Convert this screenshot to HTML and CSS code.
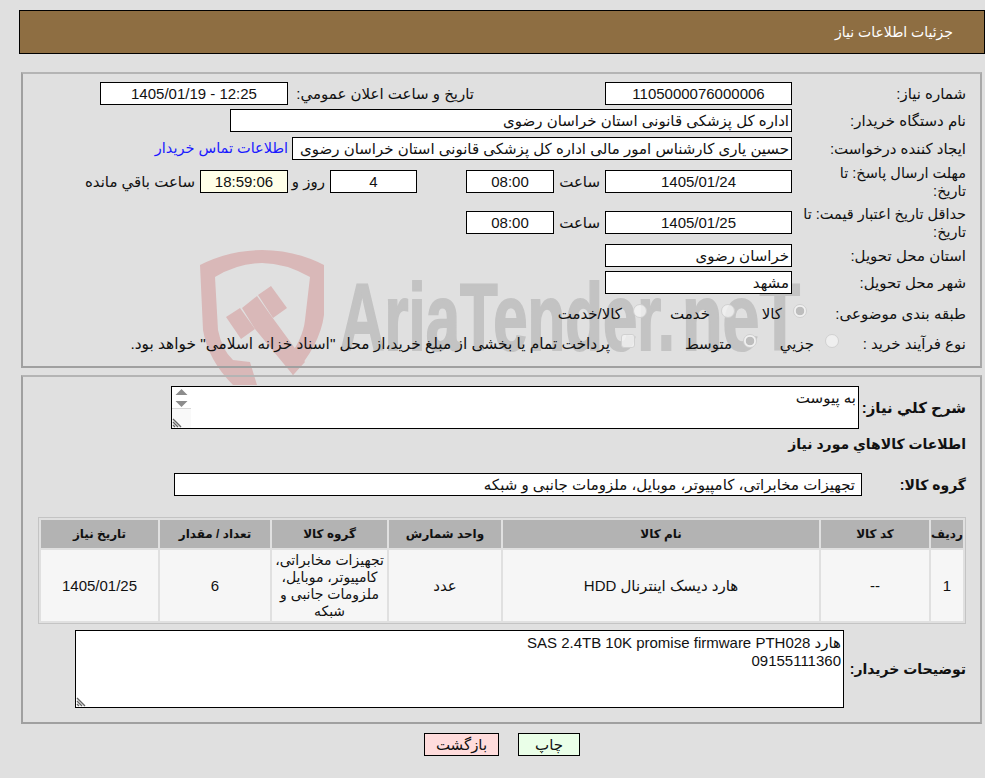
FILE: index.html
```html
<!DOCTYPE html>
<html lang="fa" dir="rtl">
<head>
<meta charset="utf-8">
<title>جزئیات اطلاعات نیاز</title>
<link rel="stylesheet" href="styles.css">
</head>
<body>
<svg class="watermark" viewBox="0 0 660 140" aria-hidden="true">
  <g fill="#d9b8b8">
    <path d="M0 15 Q30 0 62 0 Q95 0 124 15 L124 65 Q120 95 93 125 L85 112 Q103 90 105 70 L110 27 Q85 13 62 13 Q38 13 15 27 L18 80 Q22 100 33 110 L50 112 L43 100 L50 112 L57 135 L33 135 Q8 110 3 80 Z"/>
    <path d="M26 67 L40 58 L55 79 L41 89 Z"/>
    <path d="M42 58 L57 46 L72 67 L105 112 L93 125 L55 79 Z"/>
    <path d="M58 45 L71 36 L87 58 L73 68 Z"/>
  </g>
  <text class="wm-text" x="140" y="100" textLength="335" lengthAdjust="spacingAndGlyphs" direction="ltr">AriaTender.</text>
  <text class="wm-text" x="482" y="100" textLength="118" lengthAdjust="spacingAndGlyphs" direction="ltr">neT</text>
</svg>

<header class="title-bar">جزئیات اطلاعات نیاز</header>

<section class="panel info">
  <div class="row">
    <span class="lbl">شماره نیاز:</span>
    <div class="field w187 center">1105000076000006</div>
    <span class="lbl-pub">تاریخ و ساعت اعلان عمومي:</span>
    <div class="field w188 center ltr">1405/01/19 - 12:25</div>
  </div>
  <div class="row">
    <span class="lbl">نام دستگاه خریدار:</span>
    <div class="field w562">اداره کل پزشکی قانونی استان خراسان رضوی</div>
  </div>
  <div class="row">
    <span class="lbl">ایجاد کننده درخواست:</span>
    <div class="field w500">حسین یاری کارشناس امور مالی اداره کل پزشکی قانونی استان خراسان رضوی</div>
    <a class="contact" href="#">اطلاعات تماس خریدار</a>
  </div>
  <div class="row">
    <span class="lbl wrap">مهلت ارسال پاسخ: تا<br>تاریخ:</span>
    <div class="field w187 center">1405/01/24</div>
    <span class="time-lbl">ساعت</span>
    <div class="field w88 center">08:00</div>
    <div class="field w87 center days">4</div>
    <span class="day-lbl">روز و</span>
    <div class="field w88 center timer">18:59:06</div>
    <span class="remain">ساعت باقي مانده</span>
  </div>
  <div class="row">
    <span class="lbl wrap">حداقل تاریخ اعتبار قیمت: تا<br>تاریخ:</span>
    <div class="field w187 center">1405/01/25</div>
    <span class="time-lbl">ساعت</span>
    <div class="field w88 center">08:00</div>
  </div>
  <div class="row">
    <span class="lbl">استان محل تحویل:</span>
    <div class="field w187">خراسان رضوی</div>
  </div>
  <div class="row">
    <span class="lbl">شهر محل تحویل:</span>
    <div class="field w187">مشهد</div>
  </div>
  <div class="row opts">
    <span class="lbl l159">طبقه بندی موضوعی:</span>
    <label class="opt w72"><input type="radio" name="cat" checked disabled><span>کالا</span></label>
    <label class="opt w88o"><input type="radio" name="cat" disabled><span>خدمت</span></label>
    <label class="opt"><input type="radio" name="cat" disabled><span>کالا/خدمت</span></label>
  </div>
  <div class="row opts">
    <span class="lbl l127">نوع فرآیند خرید :</span>
    <label class="opt w82"><input type="radio" name="proc" disabled><span>جزيي</span></label>
    <label class="opt w122"><input type="radio" name="proc" checked disabled><span>متوسط</span></label>
    <label class="opt"><input type="checkbox" disabled><span class="long">پرداخت تمام یا بخشی از مبلغ خرید،از محل "اسناد خزانه اسلامی" خواهد بود.</span></label>
  </div>
</section>

<section class="panel detail">
  <div class="desc-row">
    <span class="blbl big">شرح کلي نياز:</span>
    <div class="ta-wrap">
      <textarea class="desc" readonly>به پیوست</textarea>
      <svg class="scroll-deco" viewBox="0 0 19 41" aria-hidden="true">
        <rect y="22" width="19" height="19" fill="#f9f9f9"/>
        <rect y="21" width="19" height="1" fill="#d8d8d8"/>
        <path d="M9.5 2 L15.5 8 L3.5 8 Z M3.5 14 L15.5 14 L9.5 20 Z" fill="#8c8c8c"/>
        <path d="M1 32 L9 40 M1 35 L6 40 M1 38 L3 40" stroke="#666" stroke-width="1.4" fill="none"/>
      </svg>
    </div>
  </div>
  <h2 class="sub">اطلاعات کالاهاي مورد نياز</h2>
  <div class="group-row">
    <span class="blbl">گروه کالا:</span>
    <div class="field w688 inset">تجهیزات مخابراتی، کامپیوتر، موبایل، ملزومات جانبی و شبکه</div>
  </div>
  <table class="goods">
    <thead>
      <tr>
        <th class="c-idx">ردیف</th><th class="c-code">کد کالا</th><th class="c-name">نام کالا</th><th class="c-unit">واحد شمارش</th><th class="c-group">گروه کالا</th><th class="c-qty">تعداد / مقدار</th><th>تاریخ نیاز</th>
      </tr>
    </thead>
    <tbody>
      <tr>
        <td>1</td><td>--</td><td>هارد دیسک اینترنال HDD</td><td>عدد</td><td class="tight">تجهیزات مخابراتی، کامپیوتر، موبایل، ملزومات جانبی و شبکه</td><td>6</td><td>1405/01/25</td>
      </tr>
    </tbody>
  </table>
  <div class="note-row">
    <span class="blbl">توضیحات خریدار:</span>
    <div class="ta-wrap">
      <textarea class="note" readonly>هارد SAS 2.4TB 10K promise firmware PTH028
09155111360</textarea>
      <svg class="grip-deco" viewBox="0 0 11 11" aria-hidden="true">
        <path d="M1 2 L9 10 M1 5 L6 10 M1 8 L3 10" stroke="#666" stroke-width="1.4" fill="none"/>
      </svg>
    </div>
  </div>
</section>

<div class="actions">
  <button class="btn print" type="button">چاپ</button>
  <button class="btn back" type="button">بازگشت</button>
</div>
</body>
</html>
```
FILE: styles.css
```css
* { box-sizing: border-box; }
html, body { margin: 0; padding: 0; }
body {
  position: relative;
  width: 985px;
  height: 778px;
  overflow: hidden;
  background: #e0e0e0;
  color: #111;
  font: 15px/18px "Liberation Sans", "DejaVu Sans", sans-serif;
  direction: rtl;
  padding-top: 10px;
}
.watermark {
  position: absolute;
  left: 200px;
  top: 250px;
  width: 660px;
  height: 140px;
  overflow: visible;
  z-index: 0;
}
.wm-text {
  font: bold 94px "Liberation Sans Narrow", "Liberation Sans", sans-serif;
  fill: #c3c3c3;
  stroke: #c3c3c3;
  stroke-width: 2px;
}
.title-bar {
  position: relative;
  height: 44px;
  margin-left: 19px;
  padding: 12px 31px 0 0;
  background: #8e6e42;
  border: 1px solid #000;
  color: #fff;
  font-size: 14px;
}
.panel {
  position: relative;
  margin: 0 3px 0 21px;
  border-style: solid;
  border-width: 2px;
  border-color: #b4b4b4 #a8a8a8 #a0a0a0 #a0a0a0;
}
.info {
  height: 296px;
  margin-top: 18px;
  padding: 8px 14px 0 0;
  display: grid;
  grid-template-rows: 23px 24px 29px 37px 29px 23px 25px 26px 26px;
  row-gap: 4px;
}
.row { display: flex; align-items: flex-start; }
.row.opts { align-items: center; }
.lbl { width: 174px; line-height: 23px; flex: none; padding-left: 6px; }
.lbl.wrap { line-height: 18px; margin-top: -6px; font-size: 14.5px; white-space: nowrap; }
.lbl.l159 { width: 159px; }
.lbl.l127 { width: 127px; }
.field {
  flex: none;
  height: 23px;
  background: #fff;
  border: 1px solid #000;
  padding: 0 2px;
  line-height: 21px;
  white-space: nowrap;
  overflow: hidden;
}
.center { text-align: center; }
.ltr { direction: ltr; }
.inset { padding-right: 6px; }
.w187 { width: 187px; }
.w188 { width: 188px; }
.w562 { width: 562px; }
.w500 { width: 500px; }
.w88 { width: 88px; }
.w87 { width: 87px; }
.w688 { width: 688px; }
.lbl-pub { width: 317px; padding-right: 131px; line-height: 23px; flex: none; white-space: nowrap; }
.contact { color: #1a1aff; font-size: 14.5px; text-decoration: none; margin-right: 4px; line-height: 23px; white-space: nowrap; }
.time-lbl { width: 51px; padding-right: 5px; line-height: 23px; flex: none; }
.days { margin-right: 49px; }
.day-lbl { width: 42px; padding-right: 5px; line-height: 23px; flex: none; }
.timer { background: #ffffe8; }
.remain { padding-right: 5px; line-height: 23px; white-space: nowrap; }
.opt { display: flex; align-items: center; flex: none; white-space: nowrap; }
.opt input {
  appearance: none;
  margin: 0 0 4px 11px;
  width: 14px;
  height: 14px;
  flex: none;
  background: rgba(242, 242, 242, .8);
  border: 1px solid #d0d0d0;
  border-radius: 50%;
}
.opt input[type="checkbox"] { border-radius: 3px; }
.opt input:checked { background: radial-gradient(circle, #bdbdbd 0 4px, #f0f0f0 4.6px); }
.opt span { padding-top: 2px; }
.opt .long { font-size: 15.4px; }
.w72 { width: 72px; }
.w88o { width: 88px; }
.w82 { width: 82px; }
.w122 { width: 122px; }
.detail {
  height: 349px;
  margin-top: 7px;
  padding: 9px 14px 0 15px;
}
.blbl { font-weight: bold; font-size: 14px; flex: none; white-space: nowrap; }
.blbl.big { font-size: 15px; }
.desc-row { display: flex; align-items: center; height: 43px; }
.desc-row .blbl { width: 107px; }
.ta-wrap { position: relative; display: flex; }
.desc {
  display: block;
  width: 688px;
  height: 43px;
  border: 1px solid #000;
  padding: 2px 2px;
  margin: 0;
  font: inherit;
  overflow: hidden;
  resize: none;
  background: #fff;
  color: #111;
  outline: none;
}
.scroll-deco {
  position: absolute;
  left: 1px;
  top: 1px;
  width: 19px;
  height: 41px;
}
.grip-deco {
  position: absolute;
  left: 1px;
  bottom: 1px;
  width: 11px;
  height: 11px;
}
.sub { margin: 6px 0 0; font-size: 14px; line-height: 18px; font-weight: bold; }
.group-row { display: flex; align-items: center; margin-top: 20px; height: 23px; }
.group-row .blbl { width: 104px; }
.goods {
  width: 928px;
  margin: 21px 0 0 0;
  border: 1px solid #c4c4c4;
  border-spacing: 2px;
  border-collapse: separate;
  table-layout: fixed;
  text-align: center;
}
.goods th { height: 28px; padding: 0; background: #b3b3b3; font-size: 12px; font-weight: bold; }
.goods td { height: 71px; padding: 0 3px; background: #f6f6f6; line-height: 17px; }
.goods td.tight { padding: 0 1px; font-size: 14px; }
.c-idx { width: 32px; }
.c-code { width: 108px; }
.c-name { width: 316px; }
.c-unit { width: 112px; }
.c-group { width: 115px; }
.c-qty { width: 110px; }
.note-row { display: flex; align-items: center; margin-top: 6px; }
.note-row .blbl { width: 122px; }
.note {
  display: block;
  width: 769px;
  height: 78px;
  border: 1px solid #000;
  padding: 3px 2px;
  margin: 0;
  font: inherit;
  resize: none;
  background: #fff;
  color: #111;
  outline: none;
}
.actions { position: relative; display: flex; justify-content: center; gap: 19px; margin-top: 9px; padding-left: 19px; }
.btn {
  height: 23px;
  border: 1px solid #000;
  padding: 0;
  font: inherit;
  color: #111;
}
.print { width: 62px; background: #eaffe8; }
.back { width: 75px; background: #ffdcdc; }
```
